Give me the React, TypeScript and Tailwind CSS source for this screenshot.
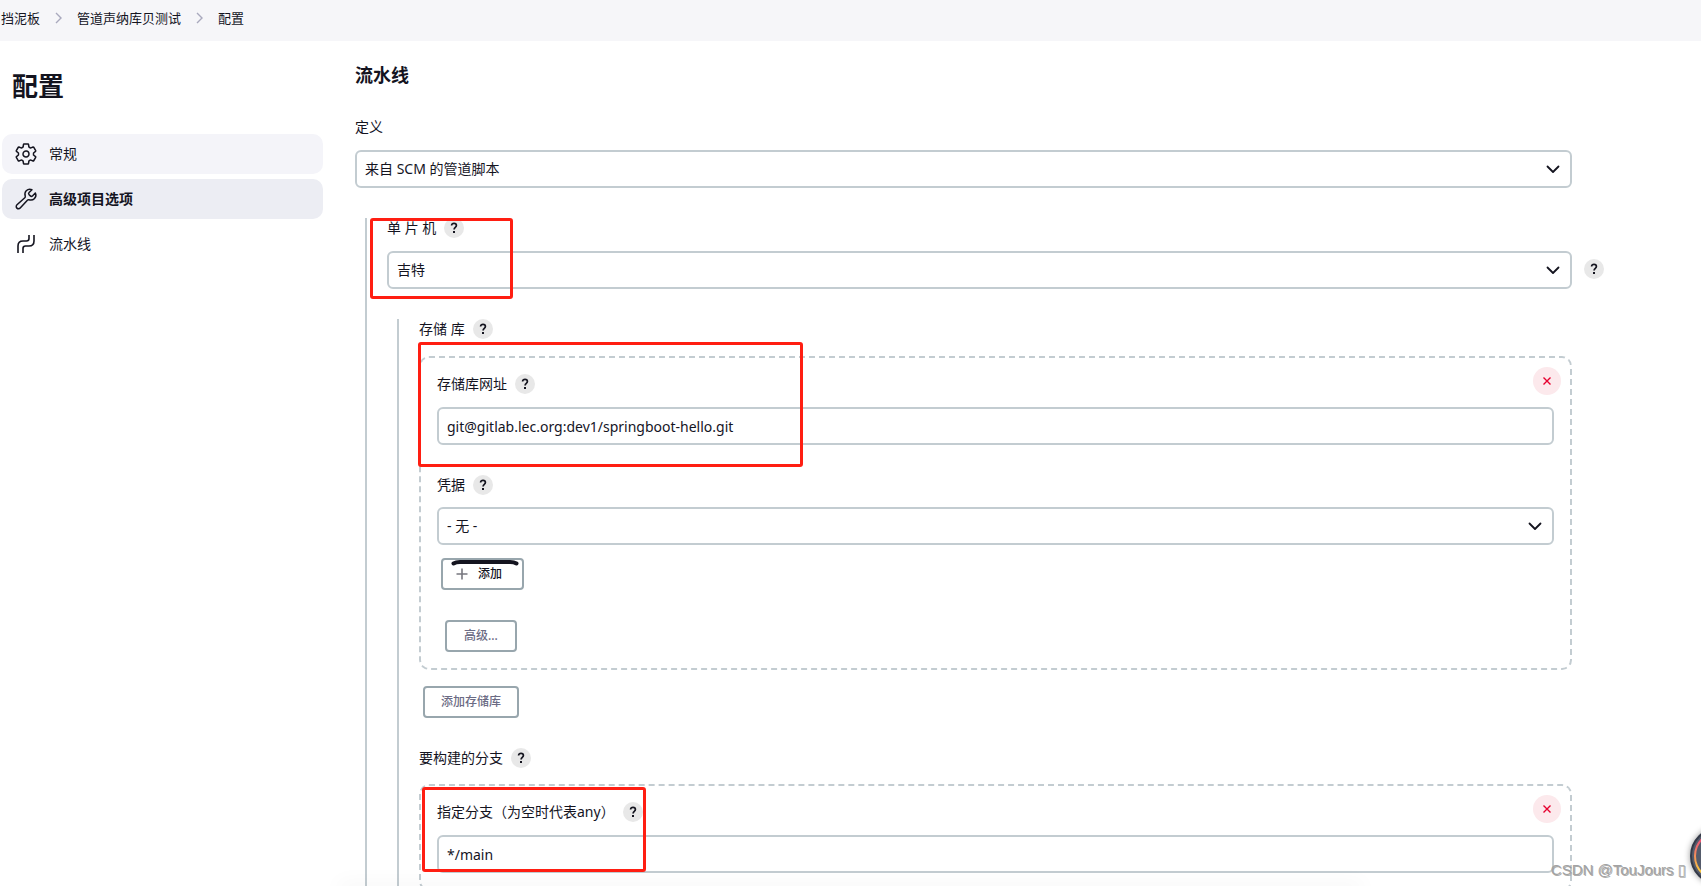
import { useState } from 'react';
import type { ReactNode } from 'react';

const fieldClass =
  'block h-[38px] w-full appearance-none rounded-md border-2 border-[#c3ccd1] bg-white px-2 text-sm text-[#14141f] outline-none';

const buttonClass =
  'flex h-8 items-center rounded border-2 border-[#98a6ad] bg-white text-xs font-medium';

function HelpButton({ label }: { label: string }) {
  return (
    <button
      type="button"
      aria-label={label}
      className="flex size-5 shrink-0 items-center justify-center rounded-full bg-[#e8e8e8] text-[#14141f]"
    >
      <svg width="8" height="12" viewBox="0 0 8 12" fill="none">
        <path
          d="M1.6 3.6C1.6 2.2 2.6 1.4 4 1.4C5.4 1.4 6.4 2.2 6.4 3.5C6.4 5.3 4.1 5.3 4.1 7.4"
          stroke="currentColor"
          strokeWidth="1.7"
        />
        <rect x="3" y="9" width="2" height="2" fill="currentColor" />
      </svg>
    </button>
  );
}

function DeleteButton() {
  return (
    <button
      type="button"
      aria-label="删除"
      className="absolute right-[9px] top-[9px] flex size-7 items-center justify-center rounded-full bg-[#fce9ec] text-[#e6002e]"
    >
      <svg width="8" height="8" viewBox="0 0 8 8" stroke="currentColor" strokeWidth="1.4">
        <path d="M0.5 0.5L7.5 7.5M7.5 0.5L0.5 7.5" />
      </svg>
    </button>
  );
}

function FieldLabel({ htmlFor, help, children }: { htmlFor?: string; help?: boolean; children: string }) {
  return (
    <div className="flex h-5 items-center gap-2">
      <label htmlFor={htmlFor} className="text-sm leading-5">
        {children}
      </label>
      {help && <HelpButton label={`帮助：${children}`} />}
    </div>
  );
}

function SelectField({ id, options }: { id: string; options: string[] }) {
  return (
    <div className="relative">
      <select id={id} className={fieldClass}>
        {options.map((option) => (
          <option key={option}>{option}</option>
        ))}
      </select>
      <svg
        className="pointer-events-none absolute right-3 top-[15px]"
        width="14"
        height="9"
        viewBox="0 0 14 9"
        fill="none"
        stroke="#14141f"
        strokeWidth="1.8"
        strokeLinecap="round"
        strokeLinejoin="round"
      >
        <path d="M1.5 1.5L7 7L12.5 1.5" />
      </svg>
    </div>
  );
}

function Highlight({ className }: { className: string }) {
  return <div className={`pointer-events-none absolute z-10 rounded-[3px] border-3 border-[#ff1e12] ${className}`} />;
}

function Crumb({ children }: { children: string }) {
  return (
    <a href="#" className="text-[13px] leading-5">
      {children}
    </a>
  );
}

function CrumbArrow() {
  return (
    <svg width="7" height="12" viewBox="0 0 7 12" fill="none" stroke="#a9a9bd" strokeWidth="1.4">
      <path d="M1 1L6 6L1 11" />
    </svg>
  );
}

function NavItem({ icon, className, children }: { icon: ReactNode; className?: string; children: string }) {
  return (
    <a href="#" className={`flex h-10 items-center gap-[11px] rounded-[10px] px-3 text-sm ${className ?? ''}`}>
      {icon}
      {children}
    </a>
  );
}

function GearIcon() {
  return (
    <svg width="24" height="24" viewBox="0 0 512 512" fill="none" stroke="currentColor" strokeWidth="32" strokeLinecap="round" strokeLinejoin="round">
      <path d="M262.29 192.31a64 64 0 1057.4 57.4 64.13 64.13 0 00-57.4-57.4zM416.39 256a154.34 154.34 0 01-1.53 20.79l45.21 35.46a10.81 10.81 0 012.45 13.75l-42.77 74a10.81 10.81 0 01-13.14 4.59l-44.9-18.08a16.11 16.11 0 00-15.17 1.75A164.48 164.48 0 01325 400.8a15.94 15.94 0 00-8.82 12.14l-6.73 47.89a11.08 11.08 0 01-10.68 9.17h-85.54a11.11 11.11 0 01-10.69-8.87l-6.72-47.82a16.07 16.07 0 00-9-12.22 155.3 155.3 0 01-21.46-12.57 16 16 0 00-15.11-1.71l-44.89 18.07a10.81 10.81 0 01-13.14-4.58l-42.77-74a10.8 10.8 0 012.45-13.75l38.21-30a16.05 16.05 0 006-14.08c-.36-4.17-.58-8.33-.58-12.5s.21-8.27.58-12.35a16 16 0 00-6.07-13.94l-38.19-30A10.81 10.81 0 0149.48 186l42.77-74a10.81 10.81 0 0113.14-4.59l44.9 18.08a16.11 16.11 0 0015.17-1.75A164.48 164.48 0 01187 111.2a15.94 15.94 0 008.82-12.14l6.73-47.89A11.08 11.08 0 01213.23 42h85.54a11.11 11.11 0 0110.69 8.87l6.72 47.82a16.07 16.07 0 009 12.22 155.3 155.3 0 0121.46 12.57 16 16 0 0015.11 1.71l44.89-18.07a10.81 10.81 0 0113.14 4.58l42.77 74a10.8 10.8 0 01-2.45 13.75l-38.21 30a16.05 16.05 0 00-6.05 14.08c.33 4.14.55 8.3.55 12.47z" />
    </svg>
  );
}

function WrenchIcon() {
  return (
    <svg width="24" height="24" viewBox="0 0 512 512" fill="none" stroke="currentColor" strokeWidth="32" strokeLinecap="round">
      <path d="M393.87 190a32.1 32.1 0 01-45.25 0l-26.57-26.57a32.09 32.09 0 010-45.26L382.19 58a1 1 0 00-.3-1.64c-38.82-16.64-89.15-8.16-121.11 23.57-30.58 30.35-32.32 76-21.12 115.84a31.93 31.93 0 01-9.06 32.08L64 380a48.17 48.17 0 1068 68l153.86-167a31.93 31.93 0 0131.6-9.13c39.54 10.59 84.54 8.6 114.72-21.19 32.49-32 39.5-88.56 23.75-120.93a1 1 0 00-1.6-.26z" />
    </svg>
  );
}

function PipelineIcon() {
  return (
    <svg width="24" height="24" viewBox="0 0 24 24" fill="none" stroke="currentColor" strokeWidth="1.6">
      <path d="M4 21V14C4 11 6 9 9 9H12.5C14.3 9 15 8 15 6.5V3" />
      <path d="M9 21V16.5C9 14.7 9.8 14 11.5 14H15C18.5 14 20 12 20 9V3" />
    </svg>
  );
}

// round widget docked on the right edge of the window
function FloatingWidget() {
  return (
    <svg
      className="absolute -right-[43px] bottom-0 drop-shadow-[0_0_3px_#00000066]"
      width="60"
      height="64"
      viewBox="0 0 60 64"
      fill="none"
    >
      <defs>
        <linearGradient id="ring" x1="0" y1="0" x2="0" y2="1">
          <stop offset="0.2" stopColor="#ee5a74" />
          <stop offset="0.8" stopColor="#f8c541" />
        </linearGradient>
      </defs>
      <circle cx="35" cy="34" r="28" fill="#555b6b" stroke="#343a48" strokeWidth="2" />
      <circle cx="35" cy="34" r="24" stroke="url(#ring)" strokeWidth="2" />
    </svg>
  );
}

export default function App() {
  const [repoUrl, setRepoUrl] = useState('git@gitlab.lec.org:dev1/springboot-hello.git');
  const [branch, setBranch] = useState('*/main');

  return (
    <div className="relative h-screen overflow-hidden bg-white font-['Noto_Sans','Noto_Sans_CJK_SC',sans-serif] text-[#14141f]">
      <nav className="flex h-[41px] items-center gap-[15px] bg-[#f6f6f9] pb-[5px] pl-px">
        <Crumb>挡泥板</Crumb>
        <CrumbArrow />
        <Crumb>管道声纳库贝测试</Crumb>
        <CrumbArrow />
        <Crumb>配置</Crumb>
      </nav>

      <div className="flex">
        <aside className="w-[325px] shrink-0 px-0.5 pt-[25px]">
          <h1 className="pl-[10px] text-[26px] font-bold leading-10">配置</h1>
          <div className="mt-7 flex flex-col gap-[5px]">
            <NavItem icon={<GearIcon />} className="bg-[#f4f4f9]">
              常规
            </NavItem>
            <NavItem icon={<WrenchIcon />} className="bg-[#ecedf3] font-bold">
              高级项目选项
            </NavItem>
            <NavItem icon={<PipelineIcon />}>流水线</NavItem>
          </div>
        </aside>

        <main className="min-w-0 flex-1 pl-[30px] pr-[129px] pt-5">
          <h2 className="text-lg font-bold leading-7">流水线</h2>
          <div className="mt-7">
            <FieldLabel htmlFor="definition">定义</FieldLabel>
            <div className="mt-[13px]">
              <SelectField id="definition" options={['来自 SCM 的管道脚本']} />
            </div>
          </div>

          <section className="relative ml-[10px] mt-[30px] border-l-2 border-[#c3ccd1] pl-5">
            <Highlight className="left-[3px] top-0 h-[81px] w-[143px]" />
            <FieldLabel htmlFor="scm" help>
              单 片 机
            </FieldLabel>
            <div className="relative mt-[13px]">
              <SelectField id="scm" options={['吉特']} />
              <div className="absolute -right-8 top-2">
                <HelpButton label="帮助：吉特" />
              </div>
            </div>

            <section className="ml-[10px] mt-[30px] border-l-2 border-[#c3ccd1] pl-5">
              <FieldLabel help>存储 库</FieldLabel>
              <div className="relative mt-[17px] rounded-[10px] border-2 border-dashed border-[#c3ccd1] p-4">
                <Highlight className="-left-[3px] -top-4 h-[125px] w-[385px]" />
                <DeleteButton />
                <FieldLabel htmlFor="repo-url" help>
                  存储库网址
                </FieldLabel>
                <input
                  id="repo-url"
                  type="text"
                  value={repoUrl}
                  onChange={(e) => setRepoUrl(e.target.value)}
                  className={`mt-[13px] ${fieldClass}`}
                />
                <div className="mb-3 mt-[30px]">
                  <FieldLabel htmlFor="credentials" help>
                    凭据
                  </FieldLabel>
                </div>
                <SelectField id="credentials" options={['- 无 -']} />
                <button type="button" className={`relative ml-1 mt-[13px] gap-2.5 pl-[13px] pr-5 ${buttonClass}`}>
                  <svg className="absolute left-2 top-0" width="68" height="6" viewBox="0 0 68 6" fill="none">
                    <path d="M2.5 3.5Q5 2 9 2H59Q63 2 65.5 3.5" stroke="#14141f" strokeWidth="4" strokeLinecap="round" />
                  </svg>
                  <svg width="12" height="12" viewBox="0 0 12 12" stroke="#77777f" strokeWidth="1.6">
                    <path d="M6 0.5V11.5M0.5 6H11.5" />
                  </svg>
                  添加
                </button>
                <button type="button" className={`ml-2 mt-[30px] px-[17px] text-[#6b6b84] ${buttonClass}`}>
                  高级...
                </button>
              </div>
              <button type="button" className={`ml-1 mt-4 px-4 text-[#6b6b84] ${buttonClass}`}>
                添加存储库
              </button>

              <div className="mt-[30px]">
                <FieldLabel help>要构建的分支</FieldLabel>
              </div>
              <div className="relative mt-4 rounded-[10px] border-2 border-dashed border-[#c3ccd1] p-4">
                <Highlight className="left-px top-px h-[85px] w-[224px]" />
                <DeleteButton />
                <FieldLabel htmlFor="branch" help>
                  指定分支（为空时代表any）
                </FieldLabel>
                <input
                  id="branch"
                  type="text"
                  value={branch}
                  onChange={(e) => setBranch(e.target.value)}
                  className={`mt-[13px] ${fieldClass}`}
                />
              </div>
            </section>
          </section>
        </main>
      </div>

      <div className="pointer-events-none absolute inset-x-[340px] -bottom-1 h-1 shadow-[0_0_20px_2px_#0000000f]" />
      <div className="absolute bottom-1 right-[15px] font-['Liberation_Sans','DejaVu_Sans',sans-serif] text-[15px] leading-6 text-[#a3a3a3] [text-shadow:1px_1px_0_#77777799]">
        CSDN @TouJours ▯
      </div>
      <FloatingWidget />
    </div>
  );
}
